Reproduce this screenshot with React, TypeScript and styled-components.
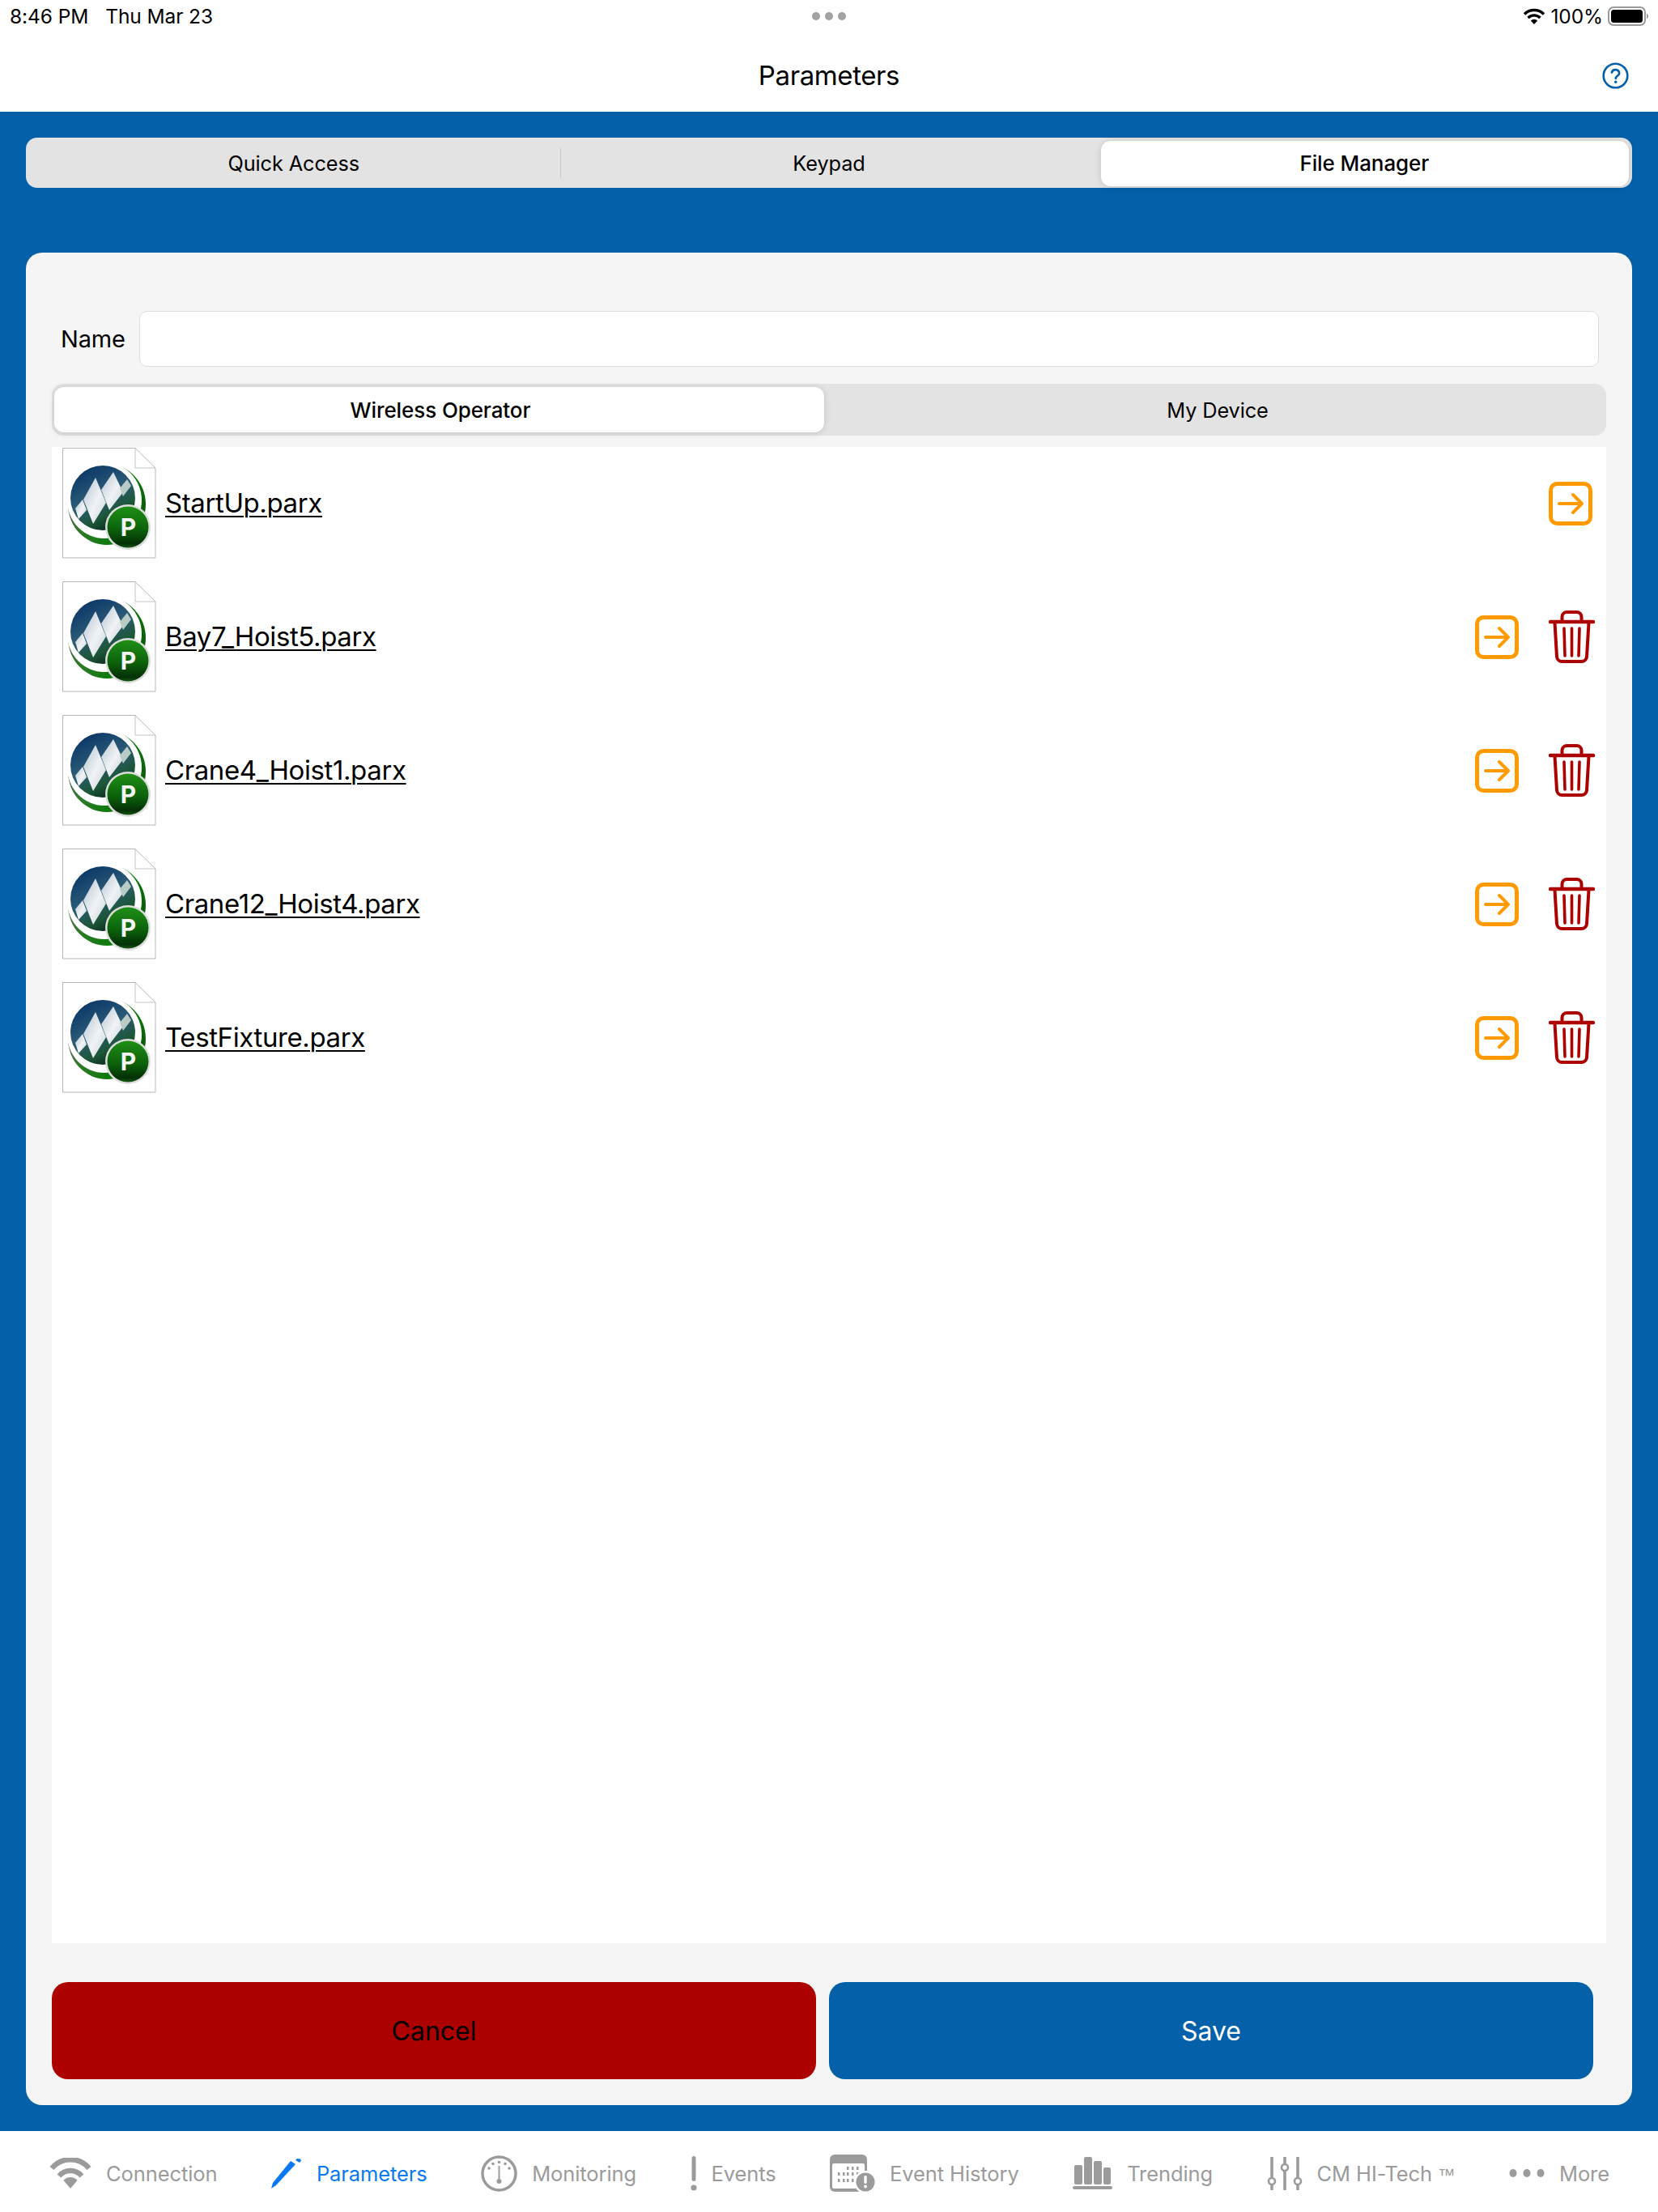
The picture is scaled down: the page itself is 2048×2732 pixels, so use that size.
import React from "react";
import styled, { createGlobalStyle } from "styled-components";

const BLUE = "#0360a9";
const RED = "#ad0000";
const ORANGE = "#ff9a00";
const MUTED = "#9b9b9b";

const GlobalStyle = createGlobalStyle`
	html, body {
		margin: 0;
		padding: 0;
		background: #ffffff;
	}
	* {
		box-sizing: border-box;
	}
	body {
		font-family: Inter, "Noto Sans", "Liberation Sans", sans-serif;
		color: #000000;
	}
`;

const Page = styled.div`
	width: 2048px;
	height: 2732px;
	display: flex;
	flex-direction: column;
`;

const StatusBar = styled.div`
	height: 40px;
	padding: 0 12px;
	display: grid;
	grid-template-columns: 1fr auto 1fr;
	align-items: center;
	font-size: 24.5px;
	letter-spacing: -0.1px;
`;

const StatusLeft = styled.div`
	display: flex;
	gap: 21px;
`;

const StatusRight = styled.div`
	display: flex;
	justify-content: flex-end;
	align-items: center;
	gap: 6px;
`;

const Dots = styled.div`
	display: flex;
	gap: 6px;
`;

const Dot = styled.span`
	width: 10px;
	height: 10px;
	border-radius: 50%;
	background: #a2a2a2;
`;

const NavBar = styled.div`
	height: 98px;
	padding: 8px 36px 0;
	display: grid;
	grid-template-columns: 33px 1fr 33px;
	align-items: center;
`;

const Title = styled.div`
	grid-column: 2;
	text-align: center;
	font-size: 33px;
	letter-spacing: -0.4px;
`;

const Body = styled.div`
	flex: 1;
	min-height: 0;
	background: ${BLUE};
	padding: 32px 32px;
	display: flex;
	flex-direction: column;
	gap: 80px;
`;

const Segments = styled.div<{ $inset?: boolean }>`
	height: ${(p) => (p.$inset ? "64px" : "62px")};
	flex-shrink: 0;
	display: flex;
	align-items: stretch;
	background: #e3e3e3;
	border-radius: 14px;
`;

const Segment = styled.div<{ $thumb?: string; $divider?: boolean }>`
	position: relative;
	isolation: isolate;
	flex: 1 1 0;
	display: flex;
	align-items: center;
	justify-content: center;
	font-size: ${(p) => (p.$thumb ? "26px" : "25.3px")};
	font-weight: ${(p) => (p.$thumb ? 500 : 400)};
	letter-spacing: -0.1px;

	&::before {
		content: "";
		display: ${(p) => (p.$thumb ? "block" : "none")};
		position: absolute;
		inset: ${(p) => p.$thumb};
		z-index: -1;
		background: #ffffff;
		border-radius: 12px;
		box-shadow: 0 1px 8px rgba(0, 0, 0, 0.14);
	}

	&::after {
		content: "";
		display: ${(p) => (p.$divider ? "block" : "none")};
		position: absolute;
		right: 0;
		top: 13px;
		bottom: 12px;
		width: 1px;
		background: #c9c9c9;
	}
`;

const Panel = styled.div`
	flex: 1;
	min-height: 0;
	background: #f5f5f5;
	border-radius: 20px;
	padding: 72px 32px 32px;
	display: flex;
	flex-direction: column;
`;

const NameRow = styled.div`
	display: flex;
	align-items: center;
	gap: 17px;
	padding: 0 9px 0 11px;
	margin-bottom: 21px;
`;

const NameLabel = styled.label`
	font-size: 29px;
	letter-spacing: -0.2px;
`;

const NameInput = styled.div`
	flex: 1;
	height: 69px;
	background: #ffffff;
	border: 1px solid #dddddd;
	border-radius: 10px;
`;

const FileList = styled.div`
	flex: 1;
	min-height: 0;
	margin-top: 14px;
	background: #ffffff;
	display: flex;
	flex-direction: column;
`;

const FileRow = styled.div`
	height: 165px;
	padding: 1px 14px 28px 13px;
	display: flex;
	align-items: center;
`;

const FileName = styled.span`
	flex: 1;
	margin-left: 11px;
	font-size: 33px;
	letter-spacing: -0.4px;
	text-decoration: underline;
	text-decoration-thickness: 2px;
	text-underline-offset: 4px;
`;

const Actions = styled.div<{ $solo?: boolean }>`
	display: flex;
	align-items: center;
	gap: 37px;
	margin-top: 2px;
	margin-right: ${(p) => (p.$solo ? "3px" : "0")};
`;

const Footer = styled.div`
	margin-top: 48px;
	padding-right: 16px;
	display: flex;
	gap: 16px;
`;

const FooterButton = styled.div<{ $tone: "cancel" | "save" }>`
	flex: 1;
	height: 120px;
	border-radius: 20px;
	display: flex;
	align-items: center;
	justify-content: center;
	font-size: 32px;
	background: ${(p) => (p.$tone === "cancel" ? RED : BLUE)};
	color: ${(p) => (p.$tone === "cancel" ? "#000000" : "#ffffff")};
`;

const TabBar = styled.div`
	height: 100px;
	flex-shrink: 0;
	padding: 4px 60px 0 61px;
	display: flex;
	align-items: center;
	justify-content: space-between;
`;

const TabItem = styled.div<{ $active?: boolean }>`
	display: flex;
	align-items: center;
	gap: 18px;
	font-size: 25.5px;
	letter-spacing: -0.1px;
	color: ${(p) => (p.$active ? "#0a78f0" : MUTED)};
`;

const TradeMark = styled.span`
	font-family: "Liberation Sans", sans-serif;
	font-size: 21.5px;
`;

const Svg = styled.svg`
	display: block;
	flex-shrink: 0;
`;

const HelpIcon = () => (
	<Svg width="33" height="33" viewBox="0 0 33 33" fill="none">
		<circle cx="16.5" cy="16.5" r="14.8" stroke={BLUE} strokeWidth="2.6" />
		<path d="M11.8 12.6a4.8 4.8 0 0 1 9.4 .8c0 3-4.4 3.4-4.4 6.6" stroke={BLUE} strokeWidth="2.6" strokeLinecap="round" />
		<circle cx="16.7" cy="24.2" r="1.7" fill={BLUE} />
	</Svg>
);

const StatusWifi = () => (
	<Svg width="28" height="22" viewBox="0 0 28 22" fill="none">
		<path d="M2 8.5a17 17 0 0 1 24 0M6.5 13a10.600 10.600 0 0 1 15 0" stroke="#000" strokeWidth="3.400" />
		<path d="M14 21l-4.200-4.400a5.800 5.800 0 0 1 8.400 0z" fill="#000" />
	</Svg>
);

const Battery = () => (
	<Svg width="50" height="24" viewBox="0 0 50 24" fill="none">
		<rect x="1" y="1" width="45" height="22" rx="6" stroke="#9a9a9a" strokeWidth="2" />
		<rect x="4" y="4" width="39" height="16" rx="3.500" fill="#000" />
		<path d="M48 8.500a4 4 0 0 1 0 7z" fill="#9a9a9a" />
	</Svg>
);

const ArrowIcon = () => (
	<Svg width="54" height="54" viewBox="0 0 54 54" fill="none" stroke={ORANGE} strokeLinecap="round" strokeLinejoin="round">
		<rect x="2.500" y="2.500" width="49" height="49" rx="8" strokeWidth="5" />
		<path d="M13 27h28M30 16l11 11-11 11" strokeWidth="4" />
	</Svg>
);

const TrashIcon = () => (
	<Svg width="57" height="66" viewBox="0 0 57 66" fill="none" stroke={RED} strokeLinecap="round" strokeLinejoin="round">
		<path d="M2 14h53" strokeWidth="4.500" />
		<path d="M16.500 13V8a6 6 0 0 1 6-6h12a6 6 0 0 1 6 6v5" strokeWidth="4" />
		<path d="M7.500 15l2.500 42a6.500 6.500 0 0 0 6.500 6h24a6.500 6.500 0 0 0 6.500-6l2.500-42" strokeWidth="4" />
		<path d="M19 22l1 34M28.500 22v34M38 22l-1 34" strokeWidth="3.600" />
	</Svg>
);

const FileIcon = ({ id }: { id: string }) => (
	<Svg width="116" height="137" viewBox="0 0 116 137">
		<defs>
			<linearGradient id={`${id}-globe`} x1="0.2" y1="0.05" x2="0.7" y2="1">
				<stop offset="0" stopColor="#0b3768" />
				<stop offset="0.45" stopColor="#2c5b76" />
				<stop offset="0.75" stopColor="#1c5638" />
				<stop offset="1" stopColor="#082416" />
			</linearGradient>
			<linearGradient id={`${id}-rim`} x1="0" y1="0.2" x2="1" y2="0.6">
				<stop offset="0" stopColor="#5a5a5a" />
				<stop offset="0.35" stopColor="#2f7a28" />
				<stop offset="0.75" stopColor="#0b7a0a" />
				<stop offset="1" stopColor="#0a5a08" />
			</linearGradient>
			<linearGradient id={`${id}-badge`} x1="0.5" y1="0" x2="0.5" y2="1">
				<stop offset="0" stopColor="#1f8f16" />
				<stop offset="0.55" stopColor="#0c620b" />
				<stop offset="0.9" stopColor="#043006" />
				<stop offset="1" stopColor="#145a12" />
			</linearGradient>
			<linearGradient id={`${id}-peak`} x1="0" y1="0" x2="1" y2="1">
				<stop offset="0" stopColor="#b4c3cf" />
				<stop offset="0.55" stopColor="#f0f3f6" />
				<stop offset="1" stopColor="#c8d2d9" />
			</linearGradient>
		</defs>
		<path d="M0.500 0.500H90L115 25V136H0.500Z" fill="#ffffff" stroke="#b5b5b5" strokeWidth="1" />
		<path d="M90 0.500V25H115" fill="none" stroke="#c4c4c4" strokeWidth="1" />
		<ellipse cx="55" cy="70" rx="48" ry="50" fill={`url(#${id}-rim)`} />
		<ellipse cx="52" cy="65" rx="46" ry="47" fill="#ffffff" />
		<circle cx="50" cy="62" r="40" fill={`url(#${id}-globe)`} />
		<polygon points="25,64 16,75 20,88 30,77" fill={`url(#${id}-peak)`} />
		<polygon points="41,37 26,64 38,94 54,68" fill={`url(#${id}-peak)`} />
		<polygon points="63,30 48,52 58,77 75,55" fill={`url(#${id}-peak)`} />
		<polygon points="80,39 71,50 75,60 85,47" fill="#b9cbc6" />
		<circle cx="81" cy="98" r="28" fill="#dcdcdc" />
		<circle cx="81" cy="98" r="25.500" fill={`url(#${id}-badge)`} />
		<text x="81.500" y="109" textAnchor="middle" fontFamily="Inter, sans-serif" fontWeight="700" fontSize="30" fill="#f4f4f4">P</text>
	</Svg>
);

const ConnectionIcon = () => (
	<Svg width="52" height="38" viewBox="0 0 52 38" fill="none" stroke={MUTED} strokeWidth="6.500">
		<path d="M3 13a30 30 0 0 1 46 0" />
		<path d="M12 22.500a18.500 18.500 0 0 1 28 0" />
		<path d="M26 38l-8.500-10a11 11 0 0 1 17 0z" fill={MUTED} stroke="none" />
	</Svg>
);

const PencilIcon = () => (
	<Svg width="38" height="37" viewBox="0 0 38 37" fill="#0a78f0">
		<path d="M0 37l2-7L24 3l6 4L6 33z" />
		<path d="M32 5l-5-3 2-2 4 .5 1 2z" transform="translate(3 0)" />
	</Svg>
);

const GaugeIcon = () => (
	<Svg width="45" height="47" viewBox="0 0 45 47" fill="none">
		<circle cx="22.500" cy="23.500" r="20.500" stroke={MUTED} strokeWidth="3.500" />
		<path d="M22.500 14v17" stroke={MUTED} strokeWidth="2" />
		<circle cx="22.500" cy="33" r="3" fill={MUTED} />
		<g fill={MUTED}>
			<circle cx="22.500" cy="9.500" r="1.800" />
			<circle cx="15" cy="11.500" r="1.800" />
			<circle cx="30" cy="11.500" r="1.800" />
			<circle cx="10" cy="17" r="1.800" />
			<circle cx="35" cy="17" r="1.800" />
		</g>
	</Svg>
);

const BangIcon = () => (
	<Svg width="8" height="43" viewBox="0 0 8 43" fill={MUTED}>
		<rect x="1.500" y="0" width="5" height="31" rx="2.500" />
		<circle cx="4" cy="39" r="3.600" />
	</Svg>
);

const HistoryIcon = () => (
	<Svg width="56" height="46" viewBox="0 0 56 46" fill={MUTED}>
		<path d="M6 0h34a6 6 0 0 1 6 6v34a6 6 0 0 1-6 6H6a6 6 0 0 1-6-6V6a6 6 0 0 1 6-6z" />
		<rect x="3" y="11" width="40" height="31" rx="2" fill="#ffffff" />
		<g>
			<rect x="21" y="15" width="2.500" height="4" />
			<rect x="27" y="15" width="2.500" height="4" />
			<rect x="33" y="15" width="2.500" height="4" />
			<rect x="10" y="22" width="2.500" height="4" />
			<rect x="16" y="22" width="2.500" height="4" />
			<rect x="21" y="22" width="2.500" height="4" />
			<rect x="27" y="22" width="2.500" height="4" />
			<rect x="33" y="22" width="2.500" height="4" />
			<rect x="10" y="30" width="2.500" height="4" />
			<rect x="16" y="30" width="2.500" height="4" />
			<rect x="21" y="30" width="2.500" height="4" />
			<rect x="27" y="30" width="2.500" height="4" />
		</g>
		<circle cx="44" cy="34" r="14" fill="#ffffff" />
		<circle cx="44" cy="34" r="11.500" />
		<rect x="42.300" y="26" width="3.400" height="10" rx="1.500" fill="#ffffff" />
		<circle cx="44" cy="39.500" r="2" fill="#ffffff" />
	</Svg>
);

const BarsIcon = () => (
	<Svg width="49" height="40" viewBox="0 0 49 40" fill={MUTED}>
		<rect x="2" y="10" width="10" height="24" rx="2" />
		<rect x="14" y="0" width="10" height="34" rx="2" />
		<rect x="26" y="5" width="10" height="29" rx="2" />
		<rect x="38" y="13" width="9" height="21" rx="2" />
		<rect x="0" y="36" width="49" height="4" rx="2" />
	</Svg>
);

const SlidersIcon = () => (
	<Svg width="44" height="41" viewBox="0 0 44 41" fill="none" stroke={MUTED} strokeWidth="3.500">
		<path d="M6 0v26M6 34v7M22 0v9M22 17v24M38 0v26M38 34v7" />
		<circle cx="6" cy="30" r="4" strokeWidth="2.600" />
		<circle cx="22" cy="13" r="4" strokeWidth="2.600" />
		<circle cx="38" cy="30" r="4" strokeWidth="2.600" />
	</Svg>
);

const MoreIcon = () => (
	<Svg width="44" height="12" viewBox="0 0 44 12" fill={MUTED}>
		<ellipse cx="5" cy="6" rx="4.500" ry="5" />
		<ellipse cx="22" cy="6" rx="4.500" ry="5" />
		<ellipse cx="39" cy="6" rx="4.500" ry="5" />
	</Svg>
);

const files = [
	{ name: "StartUp.parx", locked: true },
	{ name: "Bay7_Hoist5.parx" },
	{ name: "Crane4_Hoist1.parx" },
	{ name: "Crane12_Hoist4.parx" },
	{ name: "TestFixture.parx" },
];

const tabs = [
	{ key: "connection", label: <>Connection</>, icon: <ConnectionIcon /> },
	{ key: "parameters", label: <>Parameters</>, icon: <PencilIcon />, active: true },
	{ key: "monitoring", label: <>Monitoring</>, icon: <GaugeIcon /> },
	{ key: "events", label: <>Events</>, icon: <BangIcon /> },
	{ key: "history", label: <>Event History</>, icon: <HistoryIcon /> },
	{ key: "trending", label: <>Trending</>, icon: <BarsIcon /> },
	{ key: "hitech", label: <>CM HI-Tech <TradeMark>™</TradeMark></>, icon: <SlidersIcon /> },
	{ key: "more", label: <>More</>, icon: <MoreIcon /> },
];

export default function App() {
	return (
		<Page>
			<GlobalStyle />
			<StatusBar>
				<StatusLeft>
					<span>8:46 PM</span>
					<span>Thu Mar 23</span>
				</StatusLeft>
				<Dots>
					<Dot />
					<Dot />
					<Dot />
				</Dots>
				<StatusRight>
					<StatusWifi />
					<span>100%</span>
					<Battery />
				</StatusRight>
			</StatusBar>
			<NavBar>
				<Title>Parameters</Title>
				<HelpIcon />
			</NavBar>
			<Body>
				<Segments>
					<Segment $divider>Quick Access</Segment>
					<Segment>Keypad</Segment>
					<Segment $thumb="4px 4px 2px 5px">File Manager</Segment>
				</Segments>
				<Panel>
					<NameRow>
						<NameLabel>Name</NameLabel>
						<NameInput />
					</NameRow>
					<Segments $inset>
						<Segment $thumb="4px 6px 4px 3px">Wireless Operator</Segment>
						<Segment>My Device</Segment>
					</Segments>
					<FileList>
						{files.map((file, index) => (
							<FileRow key={file.name}>
								<FileIcon id={`file-${index}`} />
								<FileName>{file.name}</FileName>
								<Actions $solo={file.locked}>
									<ArrowIcon />
									{!file.locked && <TrashIcon />}
								</Actions>
							</FileRow>
						))}
					</FileList>
					<Footer>
						<FooterButton $tone="cancel">Cancel</FooterButton>
						<FooterButton $tone="save">Save</FooterButton>
					</Footer>
				</Panel>
			</Body>
			<TabBar>
				{tabs.map((tab) => (
					<TabItem key={tab.key} $active={tab.active}>
						{tab.icon}
						<span>{tab.label}</span>
					</TabItem>
				))}
			</TabBar>
		</Page>
	);
}
